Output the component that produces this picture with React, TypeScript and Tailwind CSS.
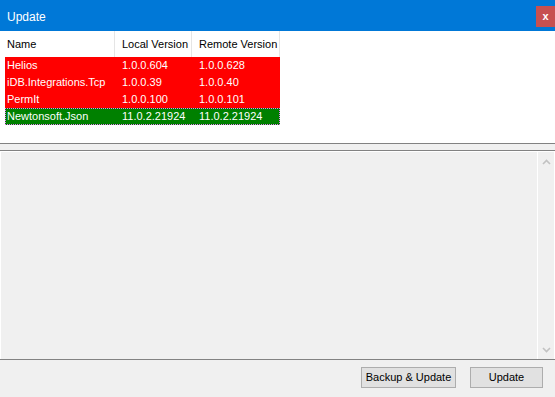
import React from 'react';

const rows = [
  { name: 'Helios', local: '1.0.0.604', remote: '1.0.0.628', ok: false },
  { name: 'iDB.Integrations.Tcp', local: '1.0.0.39', remote: '1.0.0.40', ok: false },
  { name: 'PermIt', local: '1.0.0.100', remote: '1.0.0.101', ok: false },
  { name: 'Newtonsoft.Json', local: '11.0.2.21924', remote: '11.0.2.21924', ok: true },
];

function Chevron({ down }: { down?: boolean }) {
  return (
    <svg width="9" height="6" viewBox="0 0 9 6" className={down ? 'rotate-180' : ''}>
      <path d="M1 5 L4.5 1.5 L8 5" fill="none" stroke="#c2c2c2" strokeWidth="1.6" />
    </svg>
  );
}

export default function App() {
  return (
    <div
      className="w-[555px] h-[397px] flex flex-col bg-[#f0f0f0] text-[11px] overflow-hidden"
      style={{ fontFamily: '"Liberation Sans", Arial, sans-serif' }}
    >
      {/* Title bar */}
      <div className="h-[31px] bg-[#0078d7] flex items-start justify-between shrink-0">
        <span className="text-white text-[12px] pl-[7px] pt-[8px]">Update</span>
        <button className="mt-[6px] w-[19px] h-[21px] bg-[#c75050] text-white text-[11px] font-bold leading-none flex items-center justify-center">
          x
        </button>
      </div>

      {/* List view */}
      <div className="h-[112px] bg-white shrink-0">
        <div className="flex h-[26px] text-black">
          <div className="w-[115px] pl-[7px] flex items-center border-r border-[#e5e5e5]">Name</div>
          <div className="w-[77px] pl-[7px] flex items-center border-r border-[#e5e5e5]">Local Version</div>
          <div className="w-[88px] pl-[7px] flex items-center border-r border-[#e5e5e5]">Remote Version</div>
        </div>
        <div className="ml-[5px] w-[275px]">
          {rows.map((r) => (
            <div
              key={r.name}
              className={
                'flex h-[17px] items-center text-white ' +
                (r.ok ? 'bg-[#008000] border border-dotted border-[#e879f9]' : 'bg-[#ff0000]')
              }
            >
              <div className={r.ok ? 'w-[109px] pl-[1px]' : 'w-[110px] pl-[2px]'}>{r.name}</div>
              <div className="w-[77px] pl-[7px]">{r.local}</div>
              <div className="pl-[7px]">{r.remote}</div>
            </div>
          ))}
        </div>
      </div>

      {/* Splitter */}
      <div className="h-[8px] border-t border-b border-[#828282] bg-[#f0f0f0] shrink-0" />

      {/* Text area */}
      <div className="h-[208px] flex border-t border-l border-r border-white bg-[#f0f0f0] shrink-0">
        <div className="flex-1" />
        <div className="w-[17px] border-l border-white flex flex-col items-center justify-between pt-[7px] pb-[6px]">
          <Chevron />
          <Chevron down />
        </div>
      </div>

      {/* Bottom panel */}
      <div className="flex-1 border-t border-[#828282] flex justify-end items-start pt-[7px] pr-[12px] gap-[14px]">
        <button className="w-[95px] h-[21px] bg-[#e1e1e1] border border-[#adadad] text-black text-[11px]">
          Backup &amp; Update
        </button>
        <button className="w-[73px] h-[21px] bg-[#e1e1e1] border border-[#adadad] text-black text-[11px]">
          Update
        </button>
      </div>
    </div>
  );
}
